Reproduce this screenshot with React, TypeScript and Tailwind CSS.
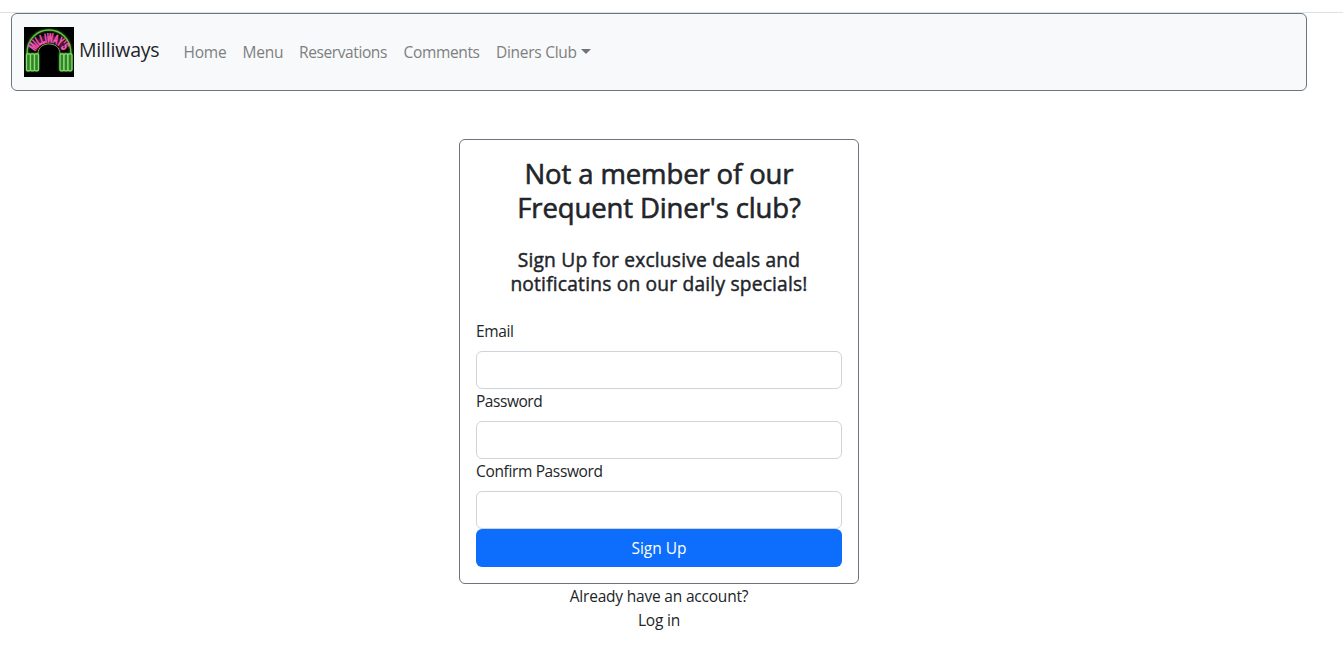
const links = [
  { label: 'Home', cls: 'w-[59px]' },
  { label: 'Menu', cls: 'w-[56.500px]' },
  { label: 'Reservations', cls: 'w-[104.500px] tracking-[-0.400px]' },
  { label: 'Comments', cls: 'w-[92.500px] tracking-[-0.350px]' },
];

// Neon sign letters with their angle (degrees) around the arch centre.
const signLetters: [string, number][] = [
  ['M', -54], ['I', -42], ['L', -31.5], ['L', -19.5], ['I', -10],
  ['W', 3], ['A', 20], ['Y', 34.5], ["'", 44], ['S', 53.5],
];

function Logo() {
  return (
    <svg width="50" height="50" viewBox="0 0 50 50" className="block shrink-0">
      <defs>
        <filter id="glow" x="-20%" y="-20%" width="140%" height="140%">
          <feGaussianBlur stdDeviation="1.2" />
        </filter>
      </defs>
      <rect width="50" height="50" fill="#000" />
      <g fill="none" stroke="#37a51f" strokeWidth="2.2" filter="url(#glow)" opacity="0.75">
        <path d="M3 27 C3 -5 47 -5 47 27" />
        <rect x="3" y="27" width="11" height="16" />
        <rect x="36" y="27" width="11" height="16" />
      </g>
      <g fill="none" stroke="#6cc04c" strokeWidth="1.3">
        <path d="M3 27 C3 -5 47 -5 47 27" />
        <path d="M14 27 C14 13.5 36 13.5 36 27" strokeWidth="1" />
      </g>
      <g fill="#2f8424" stroke="#8edc78" strokeWidth="1.3">
        <rect x="2.5" y="26.800" width="4" height="17" rx="1.2" />
        <rect x="6.5" y="26.800" width="4" height="17" rx="1.2" />
        <rect x="10.5" y="26.800" width="4" height="17" rx="1.2" />
        <rect x="36" y="26.800" width="4" height="17" rx="1.2" />
        <rect x="40" y="26.800" width="4" height="17" rx="1.2" />
        <rect x="44" y="26.800" width="4" height="17" rx="1.2" />
      </g>
      <path d="M10.5 22.500 C15 7.500 35 7.500 39.500 22.500" fill="none" stroke="#a3206e" strokeWidth="7" filter="url(#glow)" opacity="0.55" />
      <g
        fill="#f25cb8"
        stroke="#f25cb8"
        strokeWidth="0.7"
        fontFamily="'Liberation Sans', sans-serif"
        fontWeight="700"
        fontSize="13"
        textAnchor="middle"
      >
        {signLetters.map(([ch, angle], i) => (
          <text key={i} transform={`translate(25 31.3) rotate(${angle}) translate(0 -15.8) scale(0.5 1)`}>
            {ch}
          </text>
        ))}
      </g>
    </svg>
  );
}

function Field({ label, type, cls }: { label: string; type: string; cls: string }) {
  return (
    <label className="block">
      <span className={`block h-6 mb-2 leading-6 whitespace-nowrap ${cls}`}>{label}</span>
      <input type={type} className="block h-[38px] w-full rounded-md border border-[#ced4da] bg-white px-3" />
    </label>
  );
}

export default function App() {
  return (
    <div className="min-h-screen bg-white pt-3 font-['Open_Sans',sans-serif] text-[15.500px] tracking-[-0.200px] text-[#212529]">
      <div className="h-px bg-[#dee2e6]" />
      <nav className="ml-[11px] flex h-[78px] w-[1296px] items-center rounded-md border border-[#6c757d] bg-[#f8f9fa] px-3">
        <a href="#" className="flex w-[159.500px] items-center whitespace-nowrap">
          <Logo />
          <span className="ml-[5px] -mt-[4px] text-[19.500px] leading-[30px]">Milliways</span>
        </a>
        <div className="flex items-center leading-6 whitespace-nowrap text-[#7d7f81]">
          {links.map((l) => (
            <a key={l.label} href="#" className={`${l.cls} shrink-0`}>{l.label}</a>
          ))}
          <a href="#" className="flex items-center">
            <span className="w-[85px] tracking-[-0.280px]">Diners Club</span>
            <span className="-mt-[2px] border-x-[5px] border-t-[5px] border-x-transparent border-t-[#707274]" />
          </a>
        </div>
      </nav>
      <main className="mt-12 ml-[459px] w-[400px]">
        <form className="h-[445px] rounded-md border border-[#6c757d] px-4 pt-[17px]">
          <h1 className="text-center text-[27.500px] leading-[34px] font-normal tracking-[-0.120px] whitespace-nowrap [-webkit-text-stroke:0.600px_#212529]">
            Not a member of our<br />Frequent Diner's club?
          </h1>
          <h2 className="mt-[23px] mb-[23px] text-center text-[19.200px] leading-6 font-normal tracking-[0.200px] whitespace-nowrap [-webkit-text-stroke:0.450px_#212529]">
            Sign Up for exclusive deals and<br />notificatins on our daily specials!
          </h2>
          <Field label="Email" type="email" cls="tracking-[-0.400px]" />
          <Field label="Password" type="password" cls="tracking-[-0.450px]" />
          <Field label="Confirm Password" type="password" cls="tracking-[-0.350px]" />
          <button type="button" className="block h-[38px] w-full rounded-md bg-[#0d6efd] pt-px tracking-[0px] text-white">Sign Up</button>
        </form>
        <div className="text-center leading-6">
          <p>Already have an account?</p>
          <a href="#">Log in</a>
        </div>
      </main>
    </div>
  );
}
